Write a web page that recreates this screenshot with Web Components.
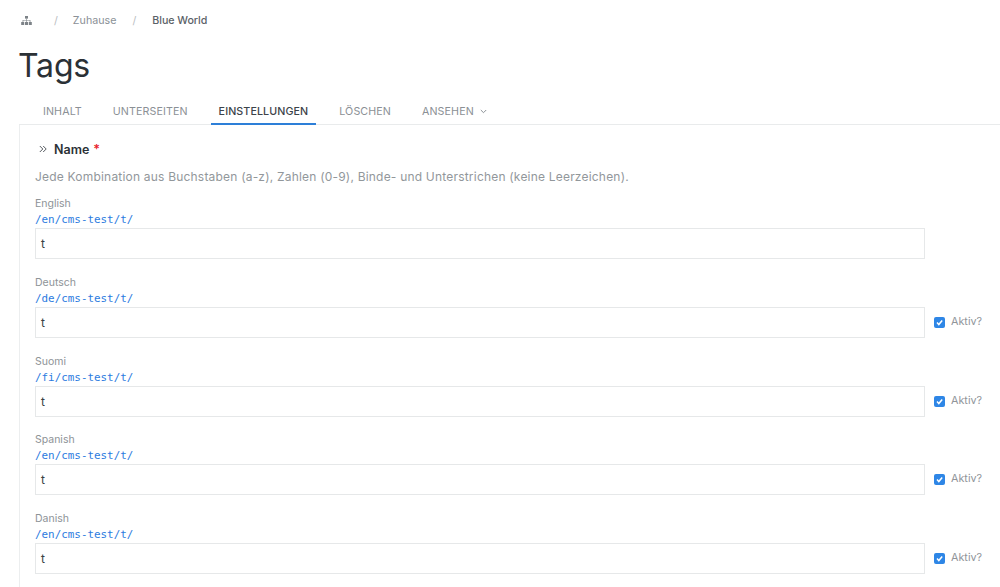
<!DOCTYPE html>
<html lang="de"><head><meta charset="utf-8"><title>Tags</title>
<style>
html,body{margin:0;height:587px;overflow:hidden;background:#fff}
body{font-family:Inter,"Liberation Sans",sans-serif;color:#2d3338}
app-page{display:block}
</style></head><body>
<app-page>
  <crumb-bar></crumb-bar>
  <h-title>Tags</h-title>
  <tab-bar></tab-bar>
  <settings-panel>
    <field-head></field-head>
    <lang-field lang-name="English" path="/en/cms-test/t/" value="t"></lang-field>
    <lang-field lang-name="Deutsch" path="/de/cms-test/t/" value="t" active></lang-field>
    <lang-field lang-name="Suomi" path="/fi/cms-test/t/" value="t" active></lang-field>
    <lang-field lang-name="Spanish" path="/en/cms-test/t/" value="t" active></lang-field>
    <lang-field lang-name="Danish" path="/en/cms-test/t/" value="t" active></lang-field>
  </settings-panel>
</app-page>
<script>
function def(name, html){
  customElements.define(name, class extends HTMLElement{
    connectedCallback(){
      if(this.shadowRoot) return;
      const r=this.attachShadow({mode:'open'});
      r.innerHTML=typeof html==='function'?html(this):html;
    }
  });
}
def('crumb-bar',`<style>
:host{display:flex;align-items:center;height:40px;padding-left:21px;font-size:10.7px;color:#8a9096;box-sizing:border-box}
svg{width:11px;height:9px;display:block;fill:#7d8388}
.s{color:#b9bdc1;margin:0 15px 0 22px}
.s2{margin:0 16px 0 16px}
b{font-weight:500;color:#5b6167;letter-spacing:-.05px}
</style>
<svg viewBox="0 0 11 9"><rect x="4" y="0" width="3" height="2.6"/><rect x=".2" y="6" width="3" height="3"/><rect x="4" y="6" width="3" height="3"/><rect x="7.8" y="6" width="3" height="3"/><path d="M5.2 2.5h.6v1.5h3.6v2h-.7V4.6H5.8V6h-.6V4.6H2.3V6h-.7V4h3.6z"/></svg>
<span class="s">/</span><span>Zuhause</span><span class="s s2">/</span><b>Blue World</b>`);
def('h-title',`<style>
:host{display:block;padding-left:18px;height:57px;font-size:32px;line-height:51px;font-weight:400;color:#2b3136;letter-spacing:-.2px}
</style><slot></slot>`);
def('tab-bar',`<style>
:host{display:flex;height:28px;margin-left:19px;box-sizing:border-box;border-bottom:1px solid #e9ebec;font-size:10.7px;color:#8b9095;letter-spacing:.1px}
span{display:flex;align-items:center;padding:1px 7.5px 0;margin-right:16px;height:28px;box-sizing:border-box;border-bottom:1px solid transparent;white-space:nowrap}
.a{color:#3c4349;border-bottom:2px solid #2d7fd8;font-weight:500;padding-top:2px}
.tab0{margin-left:16.5px}
svg{width:7px;height:5px;margin-left:6px;fill:none;stroke:#8b9095;stroke-width:1}
</style>
<span class="tab0">INHALT</span><span>UNTERSEITEN</span><span class="a">EINSTELLUNGEN</span><span>LÖSCHEN</span><span>ANSEHEN<svg viewBox="0 0 7 5"><path d="M.8 1l2.7 2.7L6.2 1"/></svg></span>`);
def('settings-panel',`<style>
:host{display:block;margin-left:19px;border-left:1px solid #eceeef;padding:0 0 0 15px;height:463px;box-sizing:border-box}
</style><slot></slot>`);
def('field-head',`<style>
:host{display:block;padding-top:14px}
.n{display:flex;align-items:center;height:20px;font-size:12.5px;font-weight:600;color:#2b3136;padding-left:4px}
svg{width:8px;height:8px;margin-right:7px;fill:none;stroke:#555b60;stroke-width:1}
i{font-style:normal;color:#e8202a;margin-left:4px}
p{margin:10px 0 0;font-size:12px;line-height:15px;color:#92979b;letter-spacing:.2px;white-space:nowrap}
</style>
<div class="n"><svg viewBox="0 0 8 8"><path d="M.8 1l3 3-3 3M4.2 1l3 3-3 3"/></svg>Name<i>*</i></div>
<p>Jede Kombination aus Buchstaben (a-z), Zahlen (0-9), Binde- und Unterstrichen (keine Leerzeichen).</p>`);
def('lang-field',el=>`<style>
:host{display:block;height:78.75px;padding-top:12px;box-sizing:border-box}
.l{font-size:10.5px;line-height:15px;color:#8e9397}
a{display:block;font-family:"DejaVu Sans Mono","Liberation Mono",monospace;font-size:10.9px;line-height:17px;color:#2c7be0;text-decoration:none;white-space:nowrap}
.row{display:flex;align-items:center}
.in{width:890px;height:31px;box-sizing:border-box;border:1px solid #e6e8e9;padding-left:5px;font-size:12px;line-height:29px;color:#3a4045}
.c{display:flex;align-items:center;margin-left:9px;font-size:10.8px;color:#90959a}
.b{width:11px;height:11px;background:#2e86e6;border-radius:2px;margin-right:6px;display:flex;align-items:center;justify-content:center}
.b svg{width:9px;height:9px;fill:none;stroke:#fff;stroke-width:1.5}
.t{margin-bottom:2px}
</style>
<div class="l">${el.getAttribute('lang-name')}</div>
<a href="#">${el.getAttribute('path')}</a>
<div class="row"><div class="in">${el.getAttribute('value')}</div>${el.hasAttribute('active')?`<div class="c"><span class="b"><svg viewBox="0 0 9 9"><path d="M2 4.6l1.8 1.9L7.2 2.4"/></svg></span><span class="t">Aktiv?</span></div>`:''}</div>`);
</script>
</body></html>
